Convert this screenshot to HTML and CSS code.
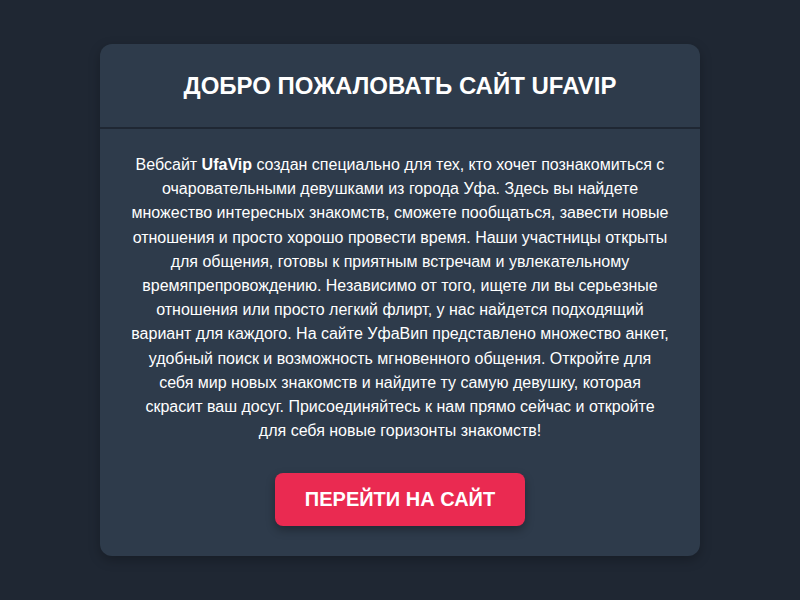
FILE: index.html
```html
<!DOCTYPE html>
<html lang="ru">
<head>
<meta charset="utf-8">
<title>UfaVip</title>
<link rel="stylesheet" href="styles.css">
</head>
<body>
<div class="card">
  <div class="card-header">
    <h1 class="title">ДОБРО ПОЖАЛОВАТЬ САЙТ UFAVIP</h1>
  </div>
  <div class="card-body">
    <p class="text">Вебсайт <strong>UfaVip</strong> создан специально для тех, кто хочет познакомиться с очаровательными девушками из города Уфа. Здесь вы найдете множество интересных знакомств, сможете пообщаться, завести новые отношения и просто хорошо провести время. Наши участницы открыты для общения, готовы к приятным встречам и увлекательному времяпрепровождению. Независимо от того, ищете ли вы серьезные отношения или просто легкий флирт, у нас найдется подходящий вариант для каждого. На сайте УфаВип представлено множество анкет, удобный поиск и возможность мгновенного общения. Откройте для себя мир новых знакомств и найдите ту самую девушку, которая скрасит ваш досуг. Присоединяйтесь к нам прямо сейчас и откройте для себя новые горизонты знакомств!</p>
    <a class="btn" href="#">ПЕРЕЙТИ НА САЙТ</a>
  </div>
</div>
</body>
</html>
```
FILE: styles.css
```css
html, body {
  margin: 0;
  padding: 0;
}
body {
  background: #1f2733;
  font-family: "Liberation Sans", Arial, sans-serif;
  color: #ffffff;
  min-height: 600px;
  display: flex;
  justify-content: center;
  align-items: flex-start;
  padding-top: 44px;
  box-sizing: border-box;
}
.card {
  width: 600px;
  background: #2e3b4b;
  border-radius: 12px;
  box-shadow: 0 4px 12px rgba(0, 0, 0, 0.25);
  overflow: hidden;
}
.card-header {
  padding: 28px 20px;
  border-bottom: 2px solid #1f2733;
  text-align: center;
}
.title {
  margin: 0;
  font-size: 24px;
  font-weight: bold;
  line-height: 27px;
  letter-spacing: 0;
}
.card-body {
  padding: 24px 30px 30px;
  text-align: center;
  display: flex;
  flex-direction: column;
  align-items: center;
}
.text {
  margin: 0;
  font-size: 16px;
  line-height: 24.2px;
}
.btn {
  display: inline-block;
  margin-top: 30px;
  width: 250px;
  box-sizing: border-box;
  padding: 15px 0;
  background: #ea2a51;
  color: #ffffff;
  text-decoration: none;
  font-weight: bold;
  font-size: 20px;
  line-height: 23px;
  border-radius: 8px;
  box-shadow: 0 4px 10px rgba(0, 0, 0, 0.3);
}
```
